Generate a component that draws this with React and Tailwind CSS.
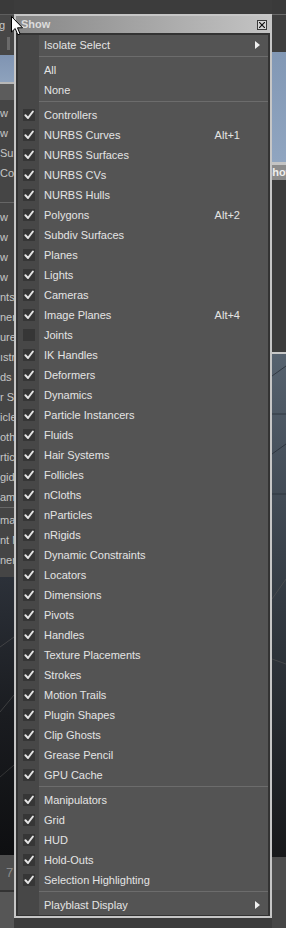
import React from 'react';

const groups = [
  [{ label: 'Isolate Select', sub: true }],
  [{ label: 'All' }, { label: 'None' }],
  [
    { label: 'Controllers', check: true },
    { label: 'NURBS Curves', check: true, key: 'Alt+1' },
    { label: 'NURBS Surfaces', check: true },
    { label: 'NURBS CVs', check: true },
    { label: 'NURBS Hulls', check: true },
    { label: 'Polygons', check: true, key: 'Alt+2' },
    { label: 'Subdiv Surfaces', check: true },
    { label: 'Planes', check: true },
    { label: 'Lights', check: true },
    { label: 'Cameras', check: true },
    { label: 'Image Planes', check: true, key: 'Alt+4' },
    { label: 'Joints', check: false },
    { label: 'IK Handles', check: true },
    { label: 'Deformers', check: true },
    { label: 'Dynamics', check: true },
    { label: 'Particle Instancers', check: true },
    { label: 'Fluids', check: true },
    { label: 'Hair Systems', check: true },
    { label: 'Follicles', check: true },
    { label: 'nCloths', check: true },
    { label: 'nParticles', check: true },
    { label: 'nRigids', check: true },
    { label: 'Dynamic Constraints', check: true },
    { label: 'Locators', check: true },
    { label: 'Dimensions', check: true },
    { label: 'Pivots', check: true },
    { label: 'Handles', check: true },
    { label: 'Texture Placements', check: true },
    { label: 'Strokes', check: true },
    { label: 'Motion Trails', check: true },
    { label: 'Plugin Shapes', check: true },
    { label: 'Clip Ghosts', check: true },
    { label: 'Grease Pencil', check: true },
    { label: 'GPU Cache', check: true },
  ],
  [
    { label: 'Manipulators', check: true },
    { label: 'Grid', check: true },
    { label: 'HUD', check: true },
    { label: 'Hold-Outs', check: true },
    { label: 'Selection Highlighting', check: true },
  ],
  [{ label: 'Playblast Display', sub: true }],
];

const leftTop = ['w', 'w', 'Sur', 'Con'];
const leftMid = ['w', 'w', 'w', 'w', 'nts', 'ner', 'ure', 'ıstr', 'ds', 'r Sy', 'icle', 'oth', 'rtic', 'gid', 'am'];
const leftLow = ['ma', 'nt M', 'ner'];

const CheckBox = ({ on }) => (
  <svg width="12" height="12" viewBox="0 0 12 12">
    <rect width="12" height="12" fill="#363636" />
    {on && (
      <path d="M2.4 6.3 L5 9 L9.9 2.5" fill="none" stroke="#e4e4e4" strokeWidth="2" strokeLinecap="round" strokeLinejoin="round" />
    )}
  </svg>
);

const Arrow = () => (
  <svg width="5" height="8" viewBox="0 0 5 8" className="mr-[8px]">
    <polygon points="0,0 5,4 0,8" fill="#f0f0f0" />
  </svg>
);

const Row = ({ item }) => (
  <div className="flex h-5">
    <div className="w-[21px] bg-[#474747] flex items-center pl-[5px]">
      {item.check !== undefined && <CheckBox on={item.check} />}
    </div>
    <div className="flex-1 flex items-center pl-[5px] text-[#e4e4e4]">
      <span className="flex-1 whitespace-nowrap">{item.label}</span>
      {item.key && <span className="mr-[28px]">{item.key}</span>}
      {item.sub && <Arrow />}
    </div>
  </div>
);

const Sep = () => (
  <div className="flex h-[5px]">
    <div className="w-[21px] bg-[#474747]" />
    <div className="flex-1 pt-px">
      <div className="h-px bg-[#6c6c6c]" />
    </div>
  </div>
);

const Frag = ({ t }) => (
  <div className="h-5 flex items-center whitespace-nowrap text-[#c6c6c6]">{t}</div>
);

export default function App() {
  return (
    <div className="relative w-[286px] h-[928px] overflow-hidden bg-[#3c3c3c] flex font-['Liberation_Sans',Arial,sans-serif] text-[11px]">
      {/* left background strip */}
      <div className="w-[14px] flex flex-col overflow-hidden">
        <div className="h-[14px] bg-[#3a3a3a]" />
        <div className="h-px bg-[#5e5e5e]" />
        <div className="h-[40px] bg-[#474747] flex flex-col text-[#c8c8c8]">
          <div className="h-[20px] flex items-center -ml-[1px]">g</div>
          <div className="h-[13px] ml-[7px] w-[3px] bg-[#6a6a6a] mt-[2px]" />
        </div>
        <div className="h-[27px] bg-linear-to-b from-[#7f94b2] to-[#8ea2bd]" />
        <div className="h-[2px] bg-[#b8b8b8]" />
        <div className="h-[16px] bg-[#5c5c5c]" />
        <div className="bg-[#454545] flex flex-col pt-[3px]">
          {leftTop.map((t, i) => <Frag key={i} t={t} />)}
          <div className="h-[19px]" />
          <div className="h-px bg-[#666]" />
          <div className="h-[4px]" />
          {leftMid.map((t, i) => <Frag key={i} t={t} />)}
          <div className="h-px bg-[#666]" />
          <div className="h-[2px]" />
          {leftLow.map((t, i) => <Frag key={i} t={t} />)}
          <div className="h-[7px]" />
        </div>
        <div className="h-[278px] bg-linear-to-b from-[#2c3139] via-[#1a1c20] to-[#0e0f11] relative">
          <svg width="14" height="278" className="absolute inset-0">
            <line x1="0" y1="70" x2="14" y2="60" stroke="#555" strokeWidth="0.6" />
            <line x1="0" y1="135" x2="14" y2="118" stroke="#555" strokeWidth="0.6" />
            <line x1="0" y1="200" x2="14" y2="188" stroke="#4a4a4a" strokeWidth="0.6" />
          </svg>
        </div>
        <div className="h-[35px] bg-[#4d4d4d] flex items-center pl-[6px] text-[#8a8a8a] text-[13px]">7</div>
        <div className="h-[2px] bg-[#333]" />
        <div className="flex-1 bg-[#565656]" />
      </div>

      {/* menu window */}
      <div className="mt-[14px] w-[258px] self-start border-2 border-[#c6c6c6] bg-[#333]">
        <div className="h-[17px] bg-linear-to-r from-[#878787] to-[#c4c4c4] flex items-center pl-[5px]">
          <span className="flex-1 font-bold text-[#dcdcdc]">Show</span>
          <div className="w-[10px] h-[10px] mr-[3px] bg-[#d6d6d6] border border-[#3a3a3a] flex items-center justify-center">
            <svg width="6" height="6" viewBox="0 0 6 6">
              <path d="M0 0 L6 6 M6 0 L0 6" stroke="#111" strokeWidth="1.2" />
            </svg>
          </div>
        </div>
        <div className="px-[2px] pt-[2px] pb-px">
          <div className="bg-[#545454]">
            {groups.map((g, gi) => (
              <React.Fragment key={gi}>
                {gi > 0 && <Sep />}
                {g.map((item, ii) => <Row key={ii} item={item} />)}
              </React.Fragment>
            ))}
          </div>
        </div>
      </div>

      {/* right background strip */}
      <div className="flex-1 flex flex-col overflow-hidden">
        <div className="h-[14px] bg-[#3a3a3a]" />
        <div className="h-px bg-[#6a6a6a]" />
        <div className="h-[37px] bg-[#3e3e3e]" />
        <div className="h-[110px] bg-linear-to-b from-[#8298b5] to-[#90a5c0]" />
        <div className="h-[3px] bg-[#c4c4c4]" />
        <div className="h-[15px] bg-[#8c8c8c] flex items-center text-[#eeeeee] font-bold -ml-[7px] whitespace-nowrap">Show</div>
        <div className="h-[172px] bg-[#3c3c3c]" />
        <div className="h-[2px] bg-[#c8c8c8]" />
        <div className="h-[503px] bg-linear-to-b from-[#56626f] via-[#333a42] to-[#18191b] relative">
          <svg width="14" height="503" className="absolute inset-0">
            <line x1="0" y1="22" x2="14" y2="12" stroke="#2a3038" strokeWidth="0.8" />
            <line x1="0" y1="60" x2="14" y2="60" stroke="#2a3038" strokeWidth="0.8" />
            <line x1="0" y1="100" x2="14" y2="90" stroke="#2a3038" strokeWidth="0.8" />
            <line x1="0" y1="140" x2="14" y2="140" stroke="#2a3038" strokeWidth="0.8" />
            <line x1="0" y1="245" x2="14" y2="225" stroke="#555" strokeWidth="0.6" />
            <line x1="0" y1="305" x2="14" y2="310" stroke="#555" strokeWidth="0.6" />
          </svg>
        </div>
        <div className="h-[33px] bg-[#4d4d4d]" />
        <div className="flex-1 bg-[#464646]" />
      </div>

      {/* mouse cursor */}
      <svg width="13" height="21" viewBox="0 0 13 21" className="absolute left-[11px] top-[16px]">
        <path d="M0.5 0.5 L0.5 16 L4.2 12.5 L6.8 18.8 L9 17.8 L6.5 11.8 L11.5 11.8 Z" fill="#ffffff" stroke="#000000" strokeWidth="1" strokeLinejoin="round" />
      </svg>
    </div>
  );
}
